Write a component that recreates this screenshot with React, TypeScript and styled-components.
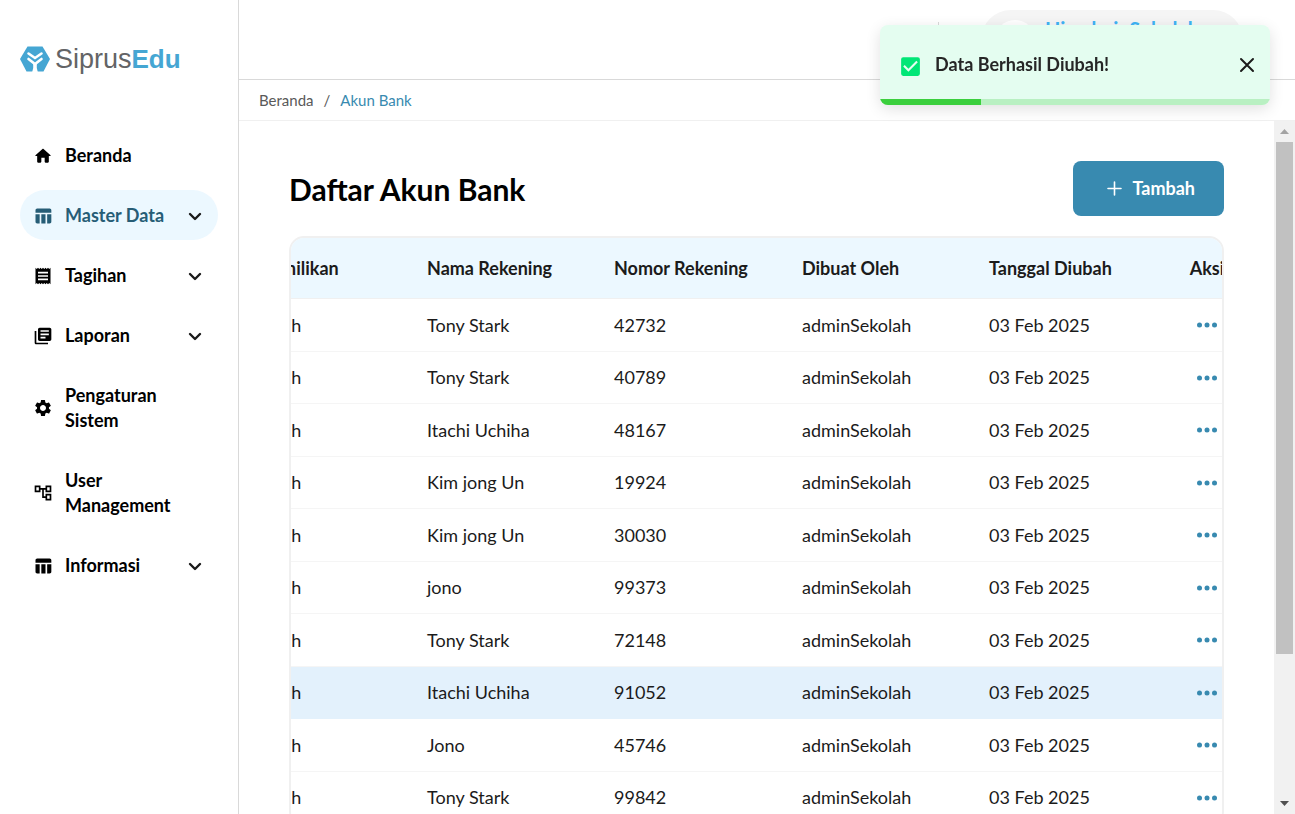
import React, { useLayoutEffect, useRef } from "react";
import styled, { createGlobalStyle } from "styled-components";
import {
  MdTableChart,
  MdReceipt,
  MdLibraryBooks,
  MdSettings,
  MdOutlineAccountTree,
  MdCheckBox,
} from "react-icons/md";

const GlobalStyle = createGlobalStyle`
  *, *::before, *::after { box-sizing: border-box; }
  body {
    margin: 0;
    background: #fff;
    color: #1b1b1b;
    font-family: Lato, "Liberation Sans", sans-serif;
    font-size: 18px;
    line-height: 25px;
  }
  button { font: inherit; color: inherit; border: 0; background: none; padding: 0; cursor: pointer; }
  a { color: inherit; text-decoration: none; }
`;

const Shell = styled.div`
  display: flex;
  height: 100vh;
  overflow: hidden;
`;

const Sidebar = styled.aside`
  flex: 0 0 239px;
  padding: 40px 20px;
  border-right: 1px solid #d9d9d9;
`;

const Logo = styled.a`
  display: flex;
  align-items: center;
  height: 38px;
  gap: 5px;
  margin-bottom: 52px;
  font-family: "Liberation Sans", Arial, sans-serif;
  font-size: 27px;
  color: #636466;
  b { font-size: 26px; color: #45a6d3; }
`;

const Nav = styled.nav`
  display: flex;
  flex-direction: column;
  gap: 10px;
`;

const NavItem = styled.button<{ $active?: boolean }>`
  display: flex;
  align-items: center;
  gap: 12px;
  width: 100%;
  min-height: 50px;
  padding: 13px 14px 12px 13px;
  border-radius: 25px;
  text-align: left;
  font-weight: 700;
  color: ${(p) => (p.$active ? "#265d76" : "#000")};
  background: ${(p) => (p.$active ? "#ecf8ff" : "transparent")};
  > svg { flex: none; }
`;

const NavLabel = styled.span`
  flex: 1;
`;

const Page = styled.div`
  flex: 1;
  min-width: 0;
  display: flex;
  flex-direction: column;
`;

const TopBar = styled.header`
  flex: 0 0 80px;
  display: flex;
  justify-content: flex-end;
  align-items: flex-start;
  gap: 42px;
  padding: 10px 52px 0 0;
  border-bottom: 1px solid #d9d9d9;
`;

const Divider = styled.span`
  width: 1px;
  height: 36px;
  margin-top: 12px;
  background: #d9d9d9;
`;

const Profile = styled.button`
  display: flex;
  align-items: center;
  gap: 10px;
  width: 262px;
  height: 60px;
  padding: 0 14px;
  border-radius: 30px;
  background: #f5f5f5;
  color: #40b4f5;
  font-size: 20px;
  font-weight: 700;
`;

const Avatar = styled.span`
  width: 40px;
  height: 40px;
  border-radius: 50%;
  background: #fff;
`;

const ProfileName = styled.span`
  align-self: flex-start;
  padding-top: 7px;
`;

const Breadcrumb = styled.nav`
  flex: 0 0 41px;
  display: flex;
  align-items: center;
  gap: 10px;
  padding: 0 20px;
  border-bottom: 1px solid #f0f0f0;
  font-size: 15px;
  color: #595959;
`;

const Current = styled.a`
  color: #388ab0;
`;

const Body = styled.div`
  flex: 1;
  min-height: 0;
  display: flex;
`;

const Main = styled.main`
  flex: 1;
  min-width: 0;
  padding: 40px 50px;
  overflow-y: auto;
  scrollbar-width: none;
`;

const Heading = styled.div`
  display: flex;
  justify-content: space-between;
  align-items: center;
  margin-bottom: 20px;
`;

const Title = styled.h1`
  margin: 0;
  font-size: 30px;
  line-height: 38px;
  font-weight: 700;
  color: #000;
`;

const AddButton = styled.button`
  display: flex;
  align-items: center;
  gap: 10px;
  height: 55px;
  padding: 0 29px 0 34px;
  border-radius: 8px;
  background: #388ab0;
  color: #fff;
  font-weight: 700;
`;

const TableFrame = styled.div`
  border: 2px solid #f0f0f0;
  border-radius: 15px;
  overflow-x: auto;
  scrollbar-width: none;
`;

const Table = styled.table`
  width: 1037px;
  table-layout: fixed;
  border-collapse: separate;
  border-spacing: 0;
`;

const HeadCell = styled.th<{ $center?: boolean }>`
  height: 61px;
  padding: 0 20px;
  border-bottom: 1px solid #f0f0f0;
  background: #ecf8ff;
  text-align: ${(p) => (p.$center ? "center" : "left")};
  font-weight: 700;
  white-space: nowrap;
`;

const Row = styled.tr<{ $active?: boolean }>`
  height: 52px;
  background: ${(p) => (p.$active ? "#e3f1fc" : "#fff")};
  &:nth-child(odd) { height: 53px; }
`;

const Cell = styled.td<{ $center?: boolean }>`
  padding: 0 20px;
  border-bottom: 1px solid #f5f5f5;
  text-align: ${(p) => (p.$center ? "center" : "left")};
  white-space: nowrap;
  tr:nth-child(8) & { border-color: #e3f1fc; }
`;

const MoreButton = styled.button`
  display: flex;
  margin: 0 auto;
`;

const ScrollTrack = styled.div`
  flex: 0 0 21px;
  display: flex;
  flex-direction: column;
  align-items: center;
  background: #f1f1f1;
`;

const ScrollArrow = styled.span<{ $down?: boolean }>`
  flex: 0 0 21px;
  display: flex;
  align-items: center;
  color: ${(p) => (p.$down ? "#505050" : "#a3a3a3")};
`;

const ScrollRail = styled.div`
  flex: 1;
  width: 17px;
`;

const ScrollThumb = styled.div`
  height: 78.7%;
  background: #c1c1c1;
`;

const Toast = styled.div`
  position: fixed;
  top: 25px;
  right: 25px;
  width: 390px;
  border-radius: 8px;
  overflow: hidden;
  background: #e4fdf0;
  box-shadow: 0 4px 15px rgba(0, 0, 0, 0.12);
`;

const ToastBody = styled.div`
  display: flex;
  align-items: center;
  gap: 12px;
  height: 74px;
  padding: 8px 15px 0 18px;
`;

const ToastText = styled.span`
  flex: 1;
  padding-bottom: 3px;
  font-weight: 700;
  color: #262626;
`;

const ToastProgress = styled.div`
  height: 6px;
  background: #b9f0c2;
`;

const ToastBar = styled.div`
  width: 26%;
  height: 6px;
  background: #3bcf3d;
`;

const HomeIcon = () => (
  <svg width="20" height="20" viewBox="0 0 24 24" fill="currentColor" aria-hidden="true">
    <path d="M10 19v-5h4v5c0 .55.45 1 1 1h3c.55 0 1-.45 1-1v-7h1.7c.46 0 .68-.57.33-.87L12.67 3.6c-.38-.34-.96-.34-1.34 0l-8.36 7.53c-.34.3-.13.87.33.87H5v7c0 .55.45 1 1 1h3c.55 0 1-.45 1-1z" />
  </svg>
);

const Chevron = () => (
  <svg width="18" height="18" viewBox="0 0 18 18" fill="none" stroke="#1b1b1b" strokeWidth="2.4" strokeLinecap="round" strokeLinejoin="round" aria-hidden="true">
    <path d="M4 7l5 5 5-5" />
  </svg>
);

const LogoMark = () => (
  <svg width="30" height="26" viewBox="0 0 30 26" aria-hidden="true">
    <path d="M7.5 0.5h15L30 13l-6.5 12.5H6.5L0 13z" fill="#45a6d3" />
    <path d="M8.5 7.5l6.500 4.500L21.500 7.500M8.500 13l6.500 5L21.500 13" fill="none" stroke="#fff" strokeWidth="2.6" strokeLinecap="round" />
    <path d="M13.2 17h3.600v5l1 4h-5.600l1-4z" fill="#fff" />
  </svg>
);

const Dots = () => (
  <svg width="20" height="6" viewBox="0 0 20 6" fill="#388ab0" aria-hidden="true">
    <circle cx="2.5" cy="3" r="2.5" />
    <circle cx="10" cy="3" r="2.5" />
    <circle cx="17.5" cy="3" r="2.5" />
  </svg>
);

const navItems = [
  { label: "Beranda", icon: <HomeIcon /> },
  { label: "Master Data", icon: <MdTableChart size={20} />, menu: true, active: true },
  { label: "Tagihan", icon: <MdReceipt size={20} />, menu: true },
  { label: "Laporan", icon: <MdLibraryBooks size={20} />, menu: true },
  { label: "Pengaturan Sistem", icon: <MdSettings size={20} /> },
  { label: "User Management", icon: <MdOutlineAccountTree size={20} /> },
  { label: "Informasi", icon: <MdTableChart size={20} />, menu: true },
];

const columns = [187, 187, 188, 187, 188, 100];

const accounts = [
  ["Tony Stark", "42732"],
  ["Tony Stark", "40789"],
  ["Itachi Uchiha", "48167"],
  ["Kim jong Un", "19924"],
  ["Kim jong Un", "30030"],
  ["jono", "99373"],
  ["Tony Stark", "72148"],
  ["Itachi Uchiha", "91052"],
  ["Jono", "45746"],
  ["Tony Stark", "99842"],
];

export default function App() {
  const frame = useRef<HTMLDivElement>(null);

  useLayoutEffect(() => {
    if (frame.current) frame.current.scrollLeft = 71;
  }, []);

  return (
    <>
      <GlobalStyle />
      <Shell>
        <Sidebar>
          <Logo href="#">
            <LogoMark />
            <span>Siprus<b>Edu</b></span>
          </Logo>
          <Nav aria-label="Menu">
            {navItems.map((item) => (
              <NavItem key={item.label} $active={item.active}>
                {item.icon}
                <NavLabel>{item.label}</NavLabel>
                {item.menu && <Chevron />}
              </NavItem>
            ))}
          </Nav>
        </Sidebar>
        <Page>
          <TopBar>
            <Divider />
            <Profile>
              <Avatar />
              <ProfileName>Hi, adminSekolah</ProfileName>
            </Profile>
          </TopBar>
          <Breadcrumb aria-label="Breadcrumb">
            <a href="#">Beranda</a>
            <span>/</span>
            <Current href="#">Akun Bank</Current>
          </Breadcrumb>
          <Body>
            <Main>
              <Heading>
                <Title>Daftar Akun Bank</Title>
                <AddButton>
                  <svg width="15" height="15" viewBox="0 0 15 15" stroke="currentColor" strokeWidth="1.6" strokeLinecap="round" aria-hidden="true">
                    <path d="M7.5 1v13M1 7.5h13" />
                  </svg>
                  Tambah
                </AddButton>
              </Heading>
              <TableFrame ref={frame}>
                <Table>
                  <colgroup>
                    {columns.map((width, i) => (
                      <col key={i} width={width} />
                    ))}
                  </colgroup>
                  <thead>
                    <tr>
                      <HeadCell>Kepemilikan</HeadCell>
                      <HeadCell>Nama Rekening</HeadCell>
                      <HeadCell>Nomor Rekening</HeadCell>
                      <HeadCell>Dibuat Oleh</HeadCell>
                      <HeadCell>Tanggal Diubah</HeadCell>
                      <HeadCell $center>Aksi</HeadCell>
                    </tr>
                  </thead>
                  <tbody>
                    {accounts.map(([name, number]) => (
                      <Row key={number} $active={number === "91052"}>
                        <Cell>Sekolah</Cell>
                        <Cell>{name}</Cell>
                        <Cell>{number}</Cell>
                        <Cell>adminSekolah</Cell>
                        <Cell>03 Feb 2025</Cell>
                        <Cell $center>
                          <MoreButton aria-label={`Aksi ${number}`}>
                            <Dots />
                          </MoreButton>
                        </Cell>
                      </Row>
                    ))}
                  </tbody>
                </Table>
              </TableFrame>
            </Main>
            <ScrollTrack aria-hidden="true">
              <ScrollArrow>
                <svg width="9" height="5" viewBox="0 0 9 5" fill="currentColor"><path d="M0 5L4.5 0 9 5z" /></svg>
              </ScrollArrow>
              <ScrollRail>
                <ScrollThumb />
              </ScrollRail>
              <ScrollArrow $down>
                <svg width="9" height="5" viewBox="0 0 9 5" fill="currentColor"><path d="M0 0L4.5 5 9 0z" /></svg>
              </ScrollArrow>
            </ScrollTrack>
          </Body>
        </Page>
      </Shell>
      <Toast role="status">
        <ToastBody>
          <MdCheckBox size={25} color="#00e676" />
          <ToastText>Data Berhasil Diubah!</ToastText>
          <button aria-label="Tutup">
            <svg width="16" height="16" viewBox="0 0 16 16" stroke="#1b1b1b" strokeWidth="2" strokeLinecap="round" aria-hidden="true">
              <path d="M2 2l12 12M14 2L2 14" />
            </svg>
          </button>
        </ToastBody>
        <ToastProgress>
          <ToastBar />
        </ToastProgress>
      </Toast>
    </>
  );
}
